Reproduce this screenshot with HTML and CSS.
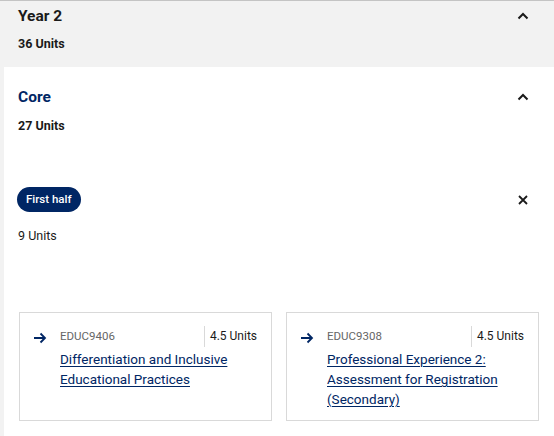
FILE: index.html
```html
<!DOCTYPE html>
<html>
<head>
<meta charset="utf-8">
<link rel="stylesheet" href="styles.css">
</head>
<body>
<div class="page">
  <section class="year">
    <div class="head-row">
      <h2 class="year-title">Year 2</h2>
      <svg class="chev" viewBox="0 0 12 8" width="12" height="8"><path d="M1.5 6.5 L6 2 L10.5 6.5" fill="none" stroke="#1a1a1a" stroke-width="2"/></svg>
    </div>
    <div class="units-bold year-units">36 Units</div>
  </section>
  <section class="panel">
    <div class="head-row">
      <h3 class="core-title">Core</h3>
      <svg class="chev" viewBox="0 0 12 8" width="12" height="8"><path d="M1.5 6.5 L6 2 L10.5 6.5" fill="none" stroke="#1a1a1a" stroke-width="2"/></svg>
    </div>
    <div class="units-bold core-units">27 Units</div>

    <div class="half-row">
      <span class="pill">First half</span>
      <svg class="close" viewBox="0 0 10 10" width="10" height="10"><path d="M1 1 L9 9 M9 1 L1 9" fill="none" stroke="#1a1a1a" stroke-width="1.8"/></svg>
    </div>
    <div class="units">9 Units</div>

    <div class="cards">
      <div class="card">
        <svg class="arrow" viewBox="0 0 14 12" width="14" height="12"><path d="M1 6 H12 M7.5 1.5 L12 6 L7.5 10.5" fill="none" stroke="#002664" stroke-width="1.8"/></svg>
        <div class="card-body">
          <div class="meta"><span class="code">EDUC9406</span><span class="credit">4.5 Units</span></div>
          <a class="title" href="#">Differentiation and Inclusive Educational Practices</a>
        </div>
      </div>
      <div class="card">
        <svg class="arrow" viewBox="0 0 14 12" width="14" height="12"><path d="M1 6 H12 M7.5 1.5 L12 6 L7.5 10.5" fill="none" stroke="#002664" stroke-width="1.8"/></svg>
        <div class="card-body">
          <div class="meta"><span class="code">EDUC9308</span><span class="credit">4.5 Units</span></div>
          <a class="title" href="#">Professional Experience 2: Assessment for Registration (Secondary)</a>
        </div>
      </div>
    </div>
  </section>
</div>
</body>
</html>
```
FILE: styles.css
```css
html, body {
  margin: 0;
  padding: 0;
  background: #f2f2f2;
  font-family: Roboto, "Noto Sans", sans-serif;
  color: #1a1a1a;
}
.page {
  border-top: 1px solid #c4c4c4;
  width: 554px;
  height: 435px;
  overflow: hidden;
}
.year {
  padding: 5px 22px 0 18px;
  height: 61px;
}
.head-row {
  display: flex;
  justify-content: space-between;
  align-items: center;
}
.year-title, .core-title {
  margin: 0;
  font-size: 15.5px;
  line-height: 20px;
  font-weight: 700;
}
.core-title {
  color: #002664;
}
.chev {
  display: block;
  margin-right: 3px;
}
.units-bold {
  font-size: 12.5px;
  font-weight: 700;
  line-height: 16px;
  margin-top: 12px;
}
.year-units {
  margin-top: 10px;
}
.core-units {
  margin-top: 11px;
}
.panel {
  background: #fff;
  margin-left: 4px;
  padding: 20px 22px 20px 14px;
  height: 329px;
}
.half-row {
  margin-top: 53px;
  display: flex;
  justify-content: space-between;
  align-items: center;
}
.pill {
  background: #002664;
  color: #fff;
  font-size: 11.5px;
  font-weight: 500;
  line-height: 25px;
  height: 25px;
  padding: 0 9px;
  border-radius: 13px;
  margin-left: -1px;
}
.close {
  display: block;
  margin-right: 4px;
}
.units {
  font-size: 12.5px;
  line-height: 16px;
  margin-top: 16px;
}
.cards {
  margin-top: 68px;
  margin-left: 1px;
  display: grid;
  grid-template-columns: 253px 253px;
  gap: 14px;
}
.card {
  border: 1px solid #d9d9d9;
  box-sizing: border-box;
  height: 109px;
  padding: 13px 14px 0 13px;
  display: flex;
  gap: 13px;
}
.arrow {
  display: block;
  margin-top: 6px;
  flex: none;
}
.card-body {
  flex: 1;
}
.meta {
  display: flex;
  justify-content: space-between;
  align-items: center;
  height: 20px;
  font-size: 11.5px;
}
.code {
  color: #666;
}
.credit {
  border-left: 1px solid #d9d9d9;
  padding-left: 5px;
  line-height: 21px;
  font-size: 12px;
  color: #1a1a1a;
}
.title {
  display: block;
  margin-top: 3px;
  font-size: 13.5px;
  line-height: 20px;
  color: #002664;
  text-decoration: underline;
  text-underline-offset: 2px;
  text-decoration-thickness: 1px;
}
```
